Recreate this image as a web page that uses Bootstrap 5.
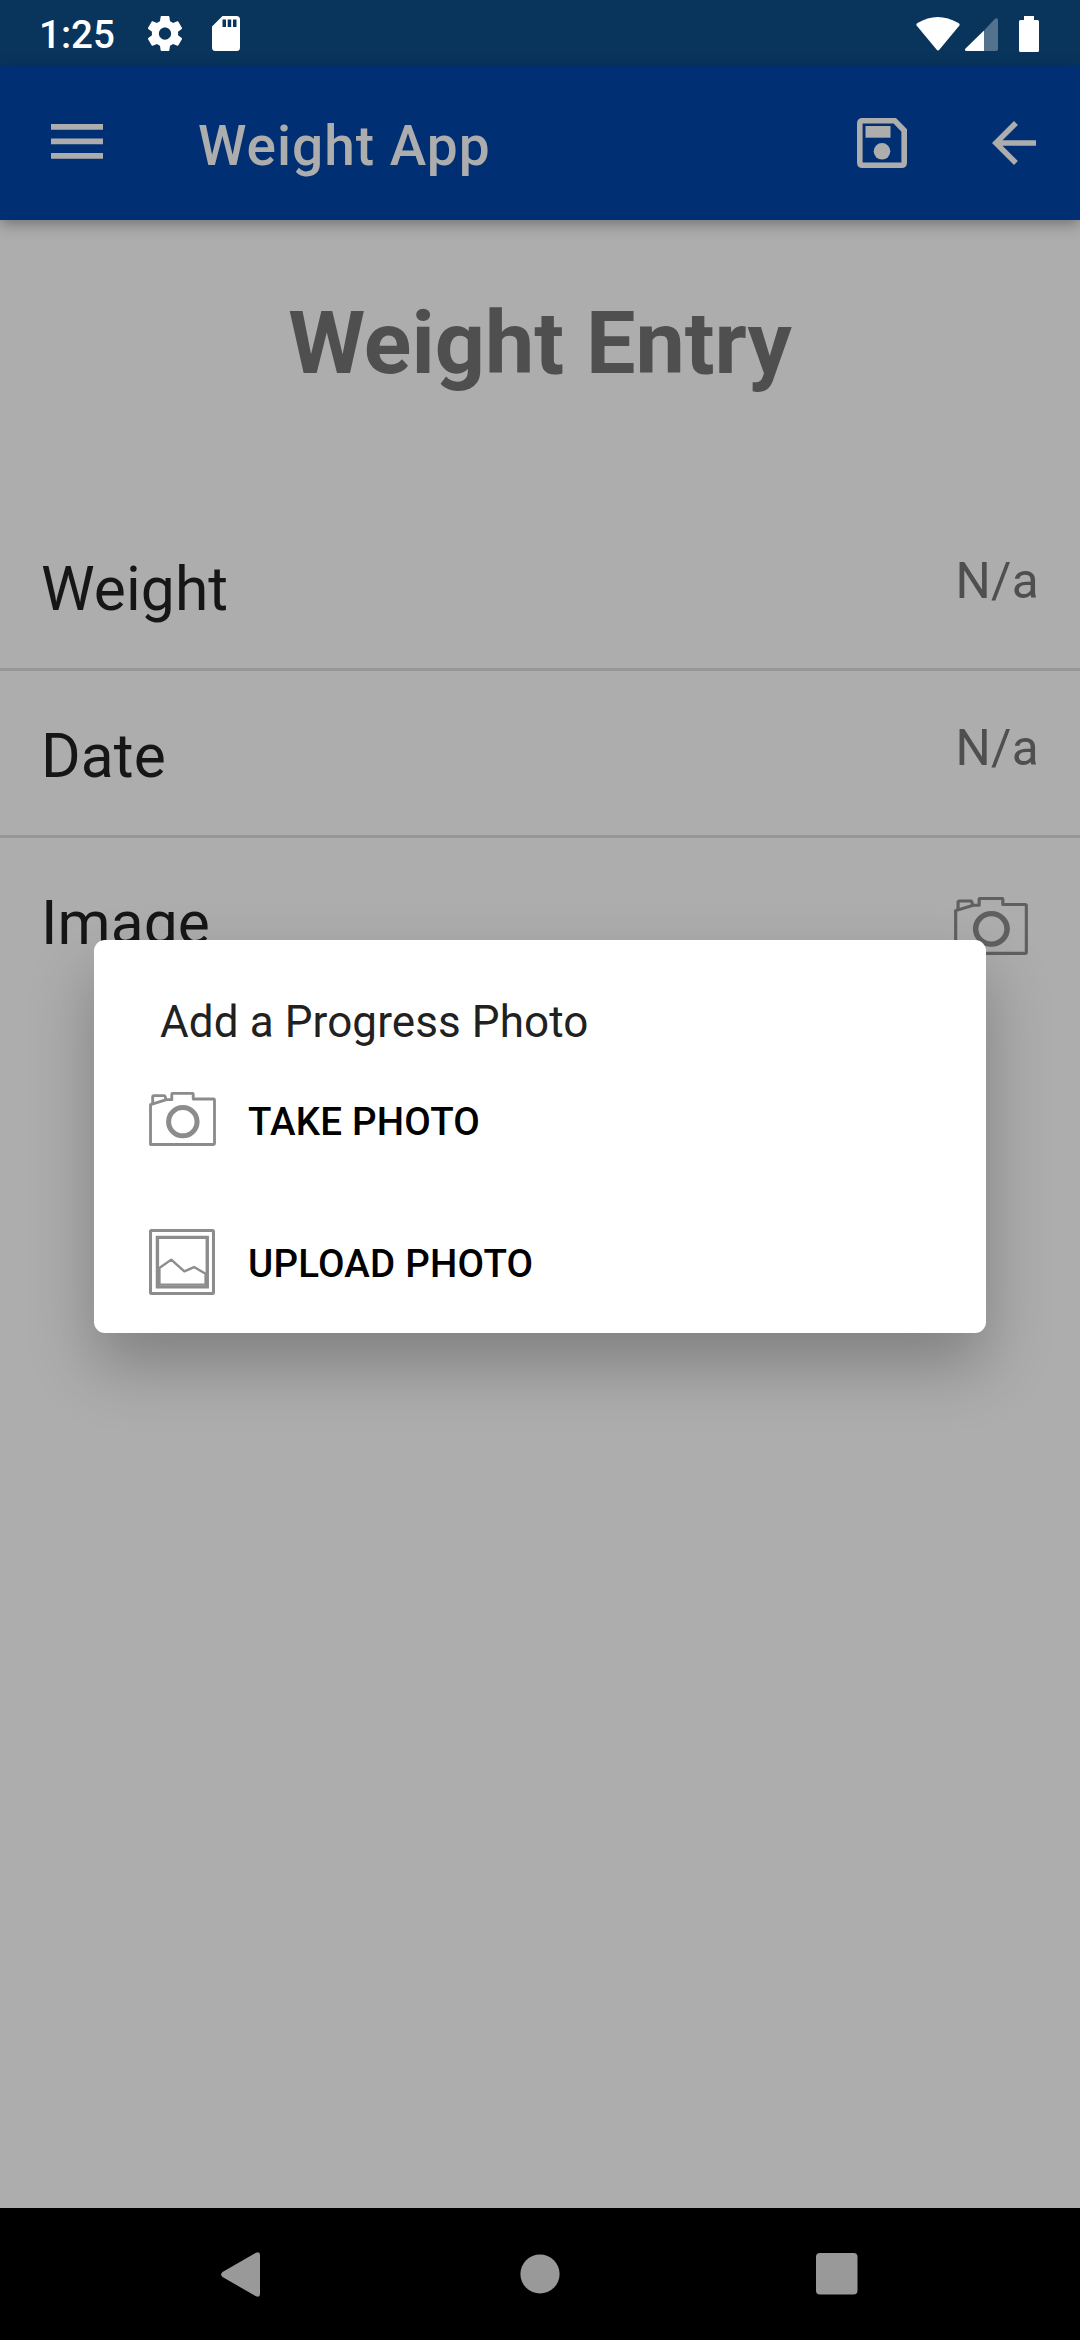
<!DOCTYPE html>
<html lang="en">
<head>
<meta charset="utf-8">
<meta name="viewport" content="width=device-width, initial-scale=1">
<title>Weight App</title>
<link href="https://cdn.jsdelivr.net/npm/bootstrap@5.3.0/dist/css/bootstrap.min.css" rel="stylesheet">
<style>
  body { font-family: Roboto, "Noto Sans", sans-serif; background: #adadad; }
  svg { display: block; flex: none; }
  .screen { width: 1080px; height: 2340px; background: #adadad; }
  .status-bar { height: 66px; background: #09355d; color: #fff; padding: 1px 41px 0 39px; }
  .clock { font-size: 38.5px; font-weight: 500; line-height: 46px; padding-top: 3px; margin-right: 33px; }
  .sd-icon { margin-left: 30px; }
  .signal-icon { margin: 2px 21px 0 5px; }
  .app-bar { height: 154px; background: #003073; color: #adadad; padding: 0 44px 0 51px; box-shadow: 0 4px 14px rgba(0,0,0,.34); z-index: 1; }
  .app-title { font-size: 55px; font-weight: 500; line-height: 66px; letter-spacing: 1px; margin-left: 95px; padding-top: 6px; }
  .menu-icon { margin-bottom: 3px; }
  .save-icon { margin-right: 85px; }
  .page-title { font-size: 88px; font-weight: 700; line-height: 104px; color: #4f4f4f; margin: 71px 0 109px; }
  .entry { height: 167px; padding: 0 41px; border-bottom: 3px solid #979797; }
  .entry:last-child { border-bottom: 0; }
  .entry-label { font-size: 60.5px; line-height: 71px; letter-spacing: .1px; color: #161616; padding-top: 50px; }
  .entry-value { font-size: 49.5px; line-height: 58px; letter-spacing: .3px; color: #4f4f4f; padding-top: 48px; }
  .entry-icon { color: #606060; margin: 59px 11px 0 0; }
  .photo-dialog { top: 940px; left: 94px; width: 892px; height: 393px; border-radius: 11px; background: #fff; z-index: 2;
    padding: 56px 55px 0; box-shadow: 0 32px 64px rgba(0,0,0,.26); }
  .dialog-title { font-size: 44px; line-height: 52px; font-weight: 400; color: #212121; letter-spacing: .1px; padding-left: 11px; margin: 0 0 2px; }
  .choice { height: 142px; color: #8c8c8c; }
  .choice-camera { margin-bottom: 4px; }
  .choice-gallery { margin: 0 1px 2px 0; }
  .choice-text { font-size: 38.5px; font-weight: 500; line-height: 46px; letter-spacing: .22px; color: #000; margin-left: 32px; padding-top: 1px; }
  .nav-keys { height: 132px; background: #000; color: #999; padding: 0 94px; }
  .nav-key { width: 297px; }
  .back-key { margin-right: 6px; }
</style>
</head>
<body>
<svg width="0" height="0" class="position-absolute" aria-hidden="true">
  <symbol id="camera" viewBox="26 20 200 162" preserveAspectRatio="none">
    <g fill="none" stroke="currentColor" stroke-width="8.5" stroke-linejoin="round">
      <path d="M30.500 177.500V58L78 43H94V27Q94 24 97 24H155Q158 24 158 27V41H218.500Q221.500 41 221.500 44V174.500Q221.500 177.500 218.500 177.500Z"/>
      <path d="M37 54V35Q37 31 41 31H71Q75 31 76 42"/>
      <circle cx="127" cy="109" r="42.500" stroke-width="15"/>
    </g>
  </symbol>
</svg>
<div class="screen d-flex flex-column position-relative overflow-hidden">

  <header class="status-bar d-flex align-items-center flex-shrink-0">
    <span class="clock">1:25</span>
    <svg width="34" height="35" viewBox="2.3 2 19.4 20" fill="#fff"><path d="M19.43 12.98c.04-.32.07-.64.07-.98s-.03-.66-.07-.98l2.11-1.65c.19-.15.24-.42.12-.64l-2-3.46c-.12-.22-.39-.3-.61-.22l-2.49 1c-.52-.4-1.08-.73-1.69-.98l-.38-2.65C14.46 2.18 14.25 2 14 2h-4c-.25 0-.46.18-.49.42l-.38 2.65c-.61.25-1.17.59-1.69.98l-2.49-1c-.23-.09-.49 0-.61.22l-2 3.46c-.13.22-.07.49.12.64l2.11 1.65c-.04.32-.07.65-.07.98s.03.66.07.98l-2.11 1.65c-.19.15-.24.42-.12.64l2 3.46c.12.22.39.3.61.22l2.49-1c.52.4 1.08.73 1.69.98l.38 2.65c.03.24.24.42.49.42h4c.25 0 .46-.18.49-.42l.38-2.65c.61-.25 1.17-.59 1.69-.98l2.49 1c.23.09.49 0 .61-.22l2-3.46c.12-.22.07-.49-.12-.64l-2.11-1.65zM12 15.5c-1.93 0-3.5-1.57-3.5-3.5s1.57-3.5 3.5-3.5 3.500 1.57 3.500 3.5-1.57 3.5-3.500 3.5z"/></svg>
    <svg class="sd-icon" width="28" height="35" viewBox="0 0 28 35" fill="#fff"><path fill-rule="evenodd" d="M10.500 0H24.500Q28 0 28 3.500V31.500Q28 35 24.500 35H3.500Q0 35 0 31.500V10.500ZM10.500 3.500V11H14V3.500ZM15.700 3.500V11H19.200V3.500ZM21 3.500V11H24.500V3.500Z"/></svg>
    <svg class="ms-auto" width="44" height="34" viewBox="0 0 44 34" fill="#fff"><path d="M1 9Q-.5 7.500 1.500 6Q21.500-6 42.500 6Q44.500 7.500 43 9L23.500 32.500Q22 34.500 20.500 32.500Z"/></svg>
    <svg class="signal-icon" width="33" height="33" viewBox="0 0 33 33"><path fill="#fff" fill-opacity=".3" d="M19 12.500L30 .8Q33-1 33 2V31Q33 33 31 33H19Z"/><path fill="#fff" d="M19 12.500V33H1.500Q-1 32.500 .5 30.500Z"/></svg>
    <svg width="20" height="36" viewBox="0 0 20 36" fill="#fff"><path d="M5 0H15V4H18.500Q20 4 20 5.500V34.500Q20 36 18.500 36H1.500Q0 36 0 34.500V5.500Q0 4 1.500 4H5Z"/></svg>
  </header>

  <nav class="app-bar d-flex align-items-center flex-shrink-0 position-relative">
    <svg class="menu-icon" width="52" height="35" viewBox="0 0 52 35" fill="currentColor"><path d="M0 0H52V5.800H0ZM0 14.500H52V20.300H0ZM0 29H52V34.800H0Z"/></svg>
    <span class="app-title me-auto">Weight App</span>
    <svg class="save-icon" width="50" height="50" viewBox="0 0 50 50" fill="currentColor"><path fill="none" stroke="currentColor" stroke-width="5.600" d="M5.500 2.800H37.800L47.200 12.500V44.500Q47.200 47.200 44.500 47.200H5.500Q2.800 47.200 2.800 44.500V5.500Q2.800 2.800 5.500 2.800Z"/><path d="M8.500 8H33.500V19.700H8.500Z"/><circle cx="25" cy="33.300" r="8.300"/></svg>
    <svg width="44" height="44" viewBox="4 4 16 16" fill="currentColor"><path d="M20 11H7.830l5.590-5.590L12 4l-8 8 8 8 1.410-1.410L7.830 13H20z"/></svg>
  </nav>

  <main class="flex-grow-1">
    <h1 class="page-title text-center">Weight Entry</h1>
    <div class="entry d-flex justify-content-between align-items-start"><span class="entry-label">Weight</span><span class="entry-value">N/a</span></div>
    <div class="entry d-flex justify-content-between align-items-start"><span class="entry-label">Date</span><span class="entry-value">N/a</span></div>
    <div class="entry d-flex justify-content-between align-items-start"><span class="entry-label">Image</span><svg class="entry-icon" width="74" height="58"><use href="#camera"/></svg></div>
  </main>

  <footer class="nav-keys d-flex justify-content-center align-items-center flex-shrink-0">
    <div class="nav-key d-flex justify-content-center"><svg class="back-key" width="39" height="45" viewBox="0 0 39 45" fill="currentColor"><path d="M1.500 20Q-1.200 22.500 1.500 25L34.500 44Q39 46 39 42V3Q39-1 34.500 1Z"/></svg></div>
    <div class="nav-key d-flex justify-content-center"><svg width="40" height="40" viewBox="0 0 40 40" fill="currentColor"><circle cx="20" cy="20" r="19.600"/></svg></div>
    <div class="nav-key d-flex justify-content-center"><svg width="42" height="42" viewBox="0 0 42 42" fill="currentColor"><rect width="41.500" height="41.500" rx="4"/></svg></div>
  </footer>

  <section class="photo-dialog position-absolute" role="dialog">
    <h2 class="dialog-title">Add a Progress Photo</h2>
    <div class="choice d-flex align-items-center"><svg class="choice-camera" width="67" height="54"><use href="#camera"/></svg><span class="choice-text">TAKE PHOTO</span></div>
    <div class="choice d-flex align-items-center">
      <svg class="choice-gallery" width="66" height="66" viewBox="27 27 196 196" fill="none" stroke="currentColor"><rect x="31.500" y="31.500" width="187" height="187" rx="3" stroke-width="9"/><path stroke-width="10" d="M52 52H200V199H52Z"/><path stroke-width="6" d="M57 192H196"/><path stroke-width="7" stroke-linejoin="round" d="M58 192V143L93 118L132 153L161 140L195 160V192"/></svg>
      <span class="choice-text">UPLOAD PHOTO</span>
    </div>
  </section>
</div>
<script src="https://cdn.jsdelivr.net/npm/bootstrap@5.3.0/dist/js/bootstrap.bundle.min.js"></script>
</body>
</html>
